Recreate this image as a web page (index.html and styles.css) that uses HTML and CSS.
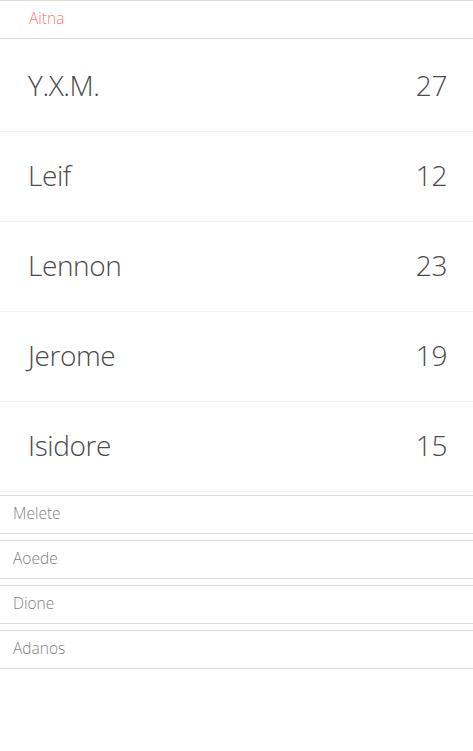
FILE: index.html
```html
<!DOCTYPE html>
<html>
<head>
<meta charset="utf-8">
<link rel="stylesheet" href="styles.css">
</head>
<body>
<div class="accordion">
  <section class="panel open">
    <div class="panel-head active">Aitna</div>
    <div class="panel-body">
      <div class="row"><span>Y.X.M.</span><span>27</span></div>
      <div class="row"><span>Leif</span><span>12</span></div>
      <div class="row"><span>Lennon</span><span>23</span></div>
      <div class="row"><span>Jerome</span><span>19</span></div>
      <div class="row"><span>Isidore</span><span>15</span></div>
    </div>
  </section>
  <section class="panel"><div class="panel-head">Melete</div></section>
  <section class="panel"><div class="panel-head">Aoede</div></section>
  <section class="panel"><div class="panel-head">Dione</div></section>
  <section class="panel"><div class="panel-head">Adanos</div></section>
</div>
</body>
</html>
```
FILE: styles.css
```css
html, body {
  margin: 0;
  padding: 0;
  background: #ffffff;
}
body {
  font-family: "Open Sans", "Liberation Sans", sans-serif;
  font-weight: 300;
}
.accordion {
  display: flex;
  flex-direction: column;
}
.panel {
  margin-bottom: 6px;
}
.panel.open {
  margin-bottom: 3px;
}
.panel-head {
  height: 35px;
  box-sizing: content-box;
  border-top: 1px solid #dcdcdc;
  border-bottom: 1px solid #dcdcdc;
  display: flex;
  align-items: center;
  padding: 0 0 2px 13px;
  font-size: 15.5px;
  line-height: 1;
  color: #808080;
}
.panel-head.active {
  padding-left: 29px;
  color: #ff7b7b;
}
.panel-body {
  padding-top: 3px;
}
.row {
  height: 85px;
  box-sizing: content-box;
  border-bottom: 1px solid #f2f2f2;
  display: flex;
  align-items: center;
  justify-content: space-between;
  padding: 0 26px 4px 28px;
  font-size: 28px;
  letter-spacing: -0.4px;
  line-height: 1;
  color: #4a4a4a;
}
```
